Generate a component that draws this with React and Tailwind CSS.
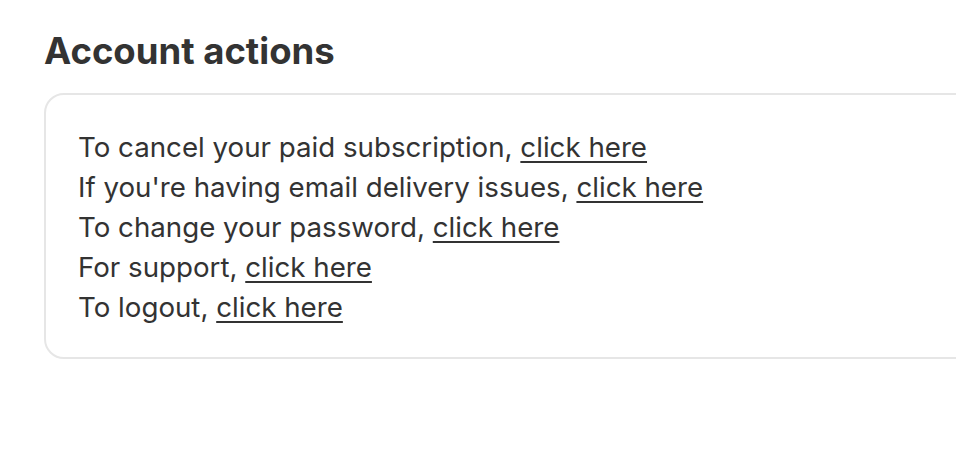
const actions = [
  'To cancel your paid subscription,',
  "If you're having email delivery issues,",
  'To change your password,',
  'For support,',
  'To logout,',
];

export default function App() {
  return (
    <div className="w-[956px] h-[458px] overflow-hidden bg-white text-[#333333]" style={{ fontFamily: 'Inter, "Liberation Sans", sans-serif' }}>
      <div className="pl-[44px] pt-[29px]">
        <h2 className="text-[36.5px] leading-[44px] font-bold text-[#333333]">Account actions</h2>
        <div className="mt-[20px] w-[1000px] rounded-[20px] border-2 border-[#e6e6e6] pl-[32px] pr-8 pt-[32px] pb-[30px]">
          {actions.map((a) => (
            <p key={a} className="text-[27.7px] leading-[40px]">
              {a}{' '}
              <a href="#" className="underline decoration-[2px] underline-offset-[4px]">click here</a>
            </p>
          ))}
        </div>
      </div>
    </div>
  );
}
